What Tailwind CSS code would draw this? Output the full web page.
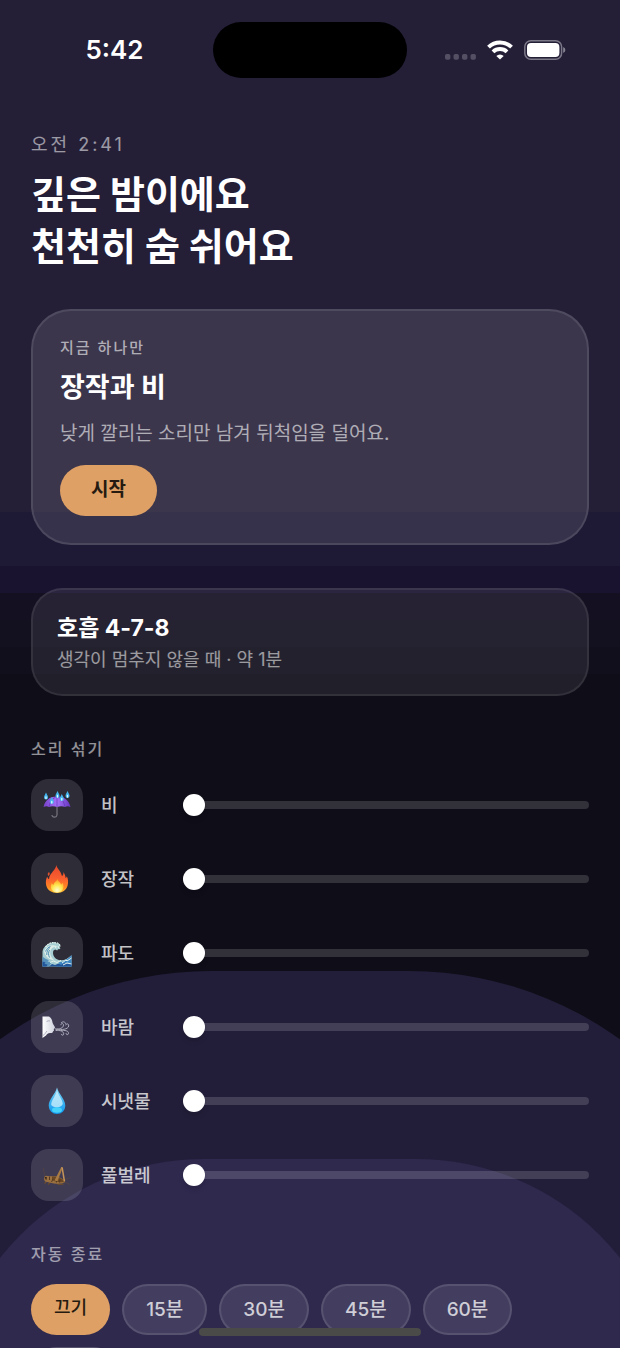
<!DOCTYPE html>
<html lang="ko">
<head>
  <meta charset="UTF-8">
  <meta name="viewport" content="width=device-width,initial-scale=1">
  <meta name="theme-color" content="#241e37">
  <title>깊은 밤 - 수면 사운드</title>
  <script src="https://cdn.jsdelivr.net/npm/@tailwindcss/browser@4"></script>
</head>
<body class="relative h-screen overflow-hidden bg-[#0f0d18] font-['Inter','Noto_Sans_CJK_KR',sans-serif] text-white">

  <!-- night sky and hills -->
  <div class="absolute inset-0 -z-10 overflow-hidden bg-[linear-gradient(to_bottom,#241e37_0_38%,#1e1935_38%_42%,#191330_42%_44%,#141022_44%_46%,#131020_46%_48%,#110f1c_48%_50%,#0f0d18_50%)]" aria-hidden="true">
    <div class="absolute top-[72%] -inset-x-[24%] h-[800px] rounded-[360px] bg-[#221e39]"></div>
    <div class="absolute top-[86%] -inset-x-[9%] h-[600px] rounded-[260px] bg-[#2e294d]"></div>
  </div>

  <header class="grid h-[100px] grid-cols-[1fr_194px_1fr] items-center">
    <div class="pl-4 text-center text-[26px] leading-8 font-semibold">5:42</div>
    <div class="h-14 rounded-full bg-black"></div>
    <div class="flex items-center justify-center gap-[11px] pr-4">
      <svg class="h-5 w-[31px]" viewBox="0 0 31 20" fill="#fff" fill-opacity=".22">
        <rect x="0" y="14" width="5.4" height="5.8" rx="1.8"/><rect x="8.5" y="14" width="5.4" height="5.8" rx="1.8"/>
        <rect x="17" y="14" width="5.4" height="5.8" rx="1.8"/><rect x="25.5" y="14" width="5.4" height="5.8" rx="1.8"/>
      </svg>
      <svg class="h-5 w-[26px]" viewBox="0 0 26 20" fill="none" stroke="#fff" stroke-width="4">
        <path d="M1.500 7.100a16.500 16.500 0 0 1 23 0"/>
        <path d="M6 11.900a10.200 10.200 0 0 1 14 0"/>
        <path d="M13 19.600l-3.700-3.700a5.300 5.300 0 0 1 7.400 0z" fill="#fff" stroke="none"/>
      </svg>
      <svg class="h-5 w-[42px]" viewBox="0 0 42 20">
        <rect x=".8" y=".8" width="36.8" height="18.4" rx="6" fill="none" stroke="#fff" stroke-opacity=".4" stroke-width="1.5"/>
        <rect x="3" y="3" width="32.4" height="14" rx="4" fill="#fff"/>
        <path d="M39.2 7q2.2 1 2.2 3t-2.2 3z" fill="#fff" fill-opacity=".45"/>
      </svg>
    </div>
  </header>

  <main class="px-[31px] pt-[33px]">
    <p class="text-lg leading-6 tracking-[3px] text-white/55">오전 2:41</p>
    <h1 class="mt-[11px] text-[38px] leading-[52px] font-bold">깊은 밤이에요<br>천천히 숨 쉬어요</h1>

    <section class="mt-[37px] rounded-[40px] border-2 border-white/10 bg-white/11 px-[27px] pt-[26px] pb-[27px]">
      <p class="text-[15px] leading-[22px] font-medium tracking-[2px] text-white/60">지금 하나만</p>
      <h2 class="mt-3 text-[27px] leading-[34px] font-bold">장작과 비</h2>
      <p class="mt-4 text-[19px] leading-[26px] text-white/60">낮게 깔리는 소리만 남겨 뒤척임을 덜어요.</p>
      <button type="button" class="mt-[18px] flex h-[51px] items-center rounded-full bg-[#dfa065] px-[31px] text-[19px] font-bold text-[#251b10]">시작</button>
    </section>

    <button type="button" class="mt-[43px] block w-full rounded-[32px] border-2 border-white/8 bg-white/8 px-6 pt-[23px] pb-[22px] text-left">
      <span class="block text-[23px] leading-[30px] font-bold">호흡 4-7-8</span>
      <span class="mt-[5px] block text-lg leading-6 text-white/55">생각이 멈추지 않을 때 · 약 1분</span>
    </button>

    <section class="mt-[41px]">
      <h3 class="text-base leading-6 font-medium tracking-[2px] text-white/55">소리 섞기</h3>
      <div class="mt-[18px] flex flex-col gap-[22px]">

        <div class="flex items-center">
          <div class="flex size-[52px] items-center justify-center rounded-[18px] bg-white/13">
            <svg class="size-[30px]" viewBox="0 0 30 30">
              <defs>
                <linearGradient id="canopy" x1="0" x2="1"><stop offset="0" stop-color="#7440c8"/><stop offset=".5" stop-color="#a672fa"/><stop offset="1" stop-color="#6535bd"/></linearGradient>
                <path id="raindrop" d="M0-4C1 -2 2-.6 2 .9a2 2 0 0 1-4 0C-2-.6-1-2 0-4z" fill="#42b5ee"/>
              </defs>
              <path d="M15 14v11a2.6 2.6 0 0 1-5 .5" fill="none" stroke="#77757f" stroke-width="1.2" stroke-linecap="round"/>
              <path d="M1.500 17C3 9.500 8.500 6.500 15 6.500s12 3 13.500 10.500c-2-1-4-1-5.500 0-2.500-1-5-1-8 0-3-1-5.500-1-8 0-1.500-1-3.500-1-5.500 0z" fill="url(#canopy)"/>
              <path d="M7 17C8 11 11 8 15 6.500M23 17C22 11 19 8 15 6.500M15 6.500V17" fill="none" stroke="#6031b6" stroke-width=".7"/>
              <use href="#raindrop" x="4" y="6.500"/><use href="#raindrop" x="15.500" y="5"/><use href="#raindrop" x="25.500" y="5"/>
              <use href="#raindrop" x="9.800" y="11"/><use href="#raindrop" x="19.800" y="8"/>
              <path d="M4 7v1.500M15.500 5.500V7M25.500 5.500V7M9.800 11.500V13M19.800 8.500V10" stroke="#dffaff" stroke-width="1.300" stroke-linecap="round"/>
            </svg>
          </div>
          <label for="rain" class="w-[100px] pt-[2px] pl-[18px] text-lg leading-6 font-medium text-white/75">비</label>
          <input id="rain" type="range" min="0" max="100" value="0" class="h-2 min-w-0 flex-1 appearance-none rounded-full bg-white/15 [&::-webkit-slider-thumb]:size-[22px] [&::-webkit-slider-thumb]:appearance-none [&::-webkit-slider-thumb]:rounded-full [&::-webkit-slider-thumb]:bg-white [&::-webkit-slider-thumb]:shadow-md">
        </div>

        <div class="flex items-center">
          <div class="flex size-[52px] items-center justify-center rounded-[18px] bg-white/13">
            <svg class="size-[30px]" viewBox="0 0 30 30">
              <defs>
                <linearGradient id="flame" x1="0" y1="0" x2="0" y2="1"><stop offset="0" stop-color="#e4472b"/><stop offset=".5" stop-color="#f9602f"/><stop offset=".8" stop-color="#ff8a22"/><stop offset="1" stop-color="#ffc53a"/></linearGradient>
                <radialGradient id="core" cx=".5" cy=".85" r=".8"><stop offset="0" stop-color="#fffbd0"/><stop offset=".5" stop-color="#ffe64d"/><stop offset="1" stop-color="#ff9126"/></radialGradient>
              </defs>
              <path d="M14.300 1c.3 3 4.500 5.800 5.700 11.200 1.200-1 1.600-2.400 1.400-4.200 1.600 2.200 2 4.500 2.300 6.300.7-.5 1-1.200 1.100-2 1.400 2.500 1.700 6 .8 9.200C24.600 26 20.300 29 15 29S5.400 26.200 4.300 21.800c-.9-3.500-.4-7 1-9.300.2 1.400.8 2.200 1.700 2.800C7.600 11 8.800 10.300 11 7.300 12.800 5 14 3.500 14.300 1z" fill="url(#flame)"/>
              <path d="M7 8c1.200 1.600.8 2.700-.4 4C5.200 10.800 5.500 9.400 7 8z" fill="#e2522d"/>
              <path d="M15.400 14.500c0 2.500 3 3.200 3.600 6 .8-.4 1.200-1.100 1.300-2 1.600 2.500 1.500 5 .3 7.300-1 1.700-3 2.700-5.400 2.700s-4.400-1-5.600-2.900c-1.200-2-1-4.600.3-6.600.3 1 .8 1.500 1.600 1.900.6-3.100 3.600-3.500 3.900-6.400z" fill="url(#core)"/>
            </svg>
          </div>
          <label for="fire" class="w-[100px] pt-[2px] pl-[18px] text-lg leading-6 font-medium text-white/75">장작</label>
          <input id="fire" type="range" min="0" max="100" value="0" class="h-2 min-w-0 flex-1 appearance-none rounded-full bg-white/15 [&::-webkit-slider-thumb]:size-[22px] [&::-webkit-slider-thumb]:appearance-none [&::-webkit-slider-thumb]:rounded-full [&::-webkit-slider-thumb]:bg-white [&::-webkit-slider-thumb]:shadow-md">
        </div>

        <div class="flex items-center">
          <div class="flex size-[52px] items-center justify-center rounded-[18px] bg-white/13">
            <svg class="size-[30px]" viewBox="0 0 30 30">
              <path d="M.5 28.500V13.500C1 9.500 5 5.500 9 5.200c2-1.500 4.500-1.200 5.500 0 2-.2 3.500 1 4 2.700l-1.300 1 1.300 2-2.500.3-.8 1.300-2-1-1.700 1c-1.500 3.500.5 8.500 6 9.700 4.500.8 8-1.500 12-5v11.300z" fill="#a5cdd2"/>
              <path d="M2 13c2-4 5.500-6 9.500-5.700 1.500.2 3.500.7 4.500 1.700-3.500-.8-6.500.5-7.500 3.500-1 3.700.8 8 4.500 10C7 22 3 18.500 2 13z" fill="#dcebe6"/>
              <path d="M3.500 13.500c1-2.500 3-4.500 5-5M4.800 17c-.3-3 1-6 3.200-7.500M7.500 19.500c-1.300-2.500-1.300-5 0-7.500" fill="none" stroke="#3f87ae" stroke-width=".9"/>
              <path d="M29.500 17v11.500H14c3.500-1.200 4-2.700 2.500-4.300 5 .3 9.500-3.200 13-7.200z" fill="#3d86c2"/>
              <path d="M.5 18.500c2 2 4 3 6.500 3.500l-1.500 1.500 4 1-2.500 4H.5z" fill="#5591bb"/>
              <path d="M.5 23.500l3 1-1 1.500 3 .5-1 2h-4zM7 28.500l3-2.500 3 1 3.500-1.500 2.500 1.500 3.500-2 7 .5v3z" fill="#205699"/>
              <path d="M8 24.500l3.500-1.500 3.500 1.500 4-2M20 25l4-3 1 1 4.500-3M21 27l4-2 4.500 1" fill="none" stroke="#e3f3ef" stroke-width="1"/>
              <path d="M3.500 9l3-3 3.500-1.500 3.500.3 2 .2 2 1.500.7 2.500M13 8.500l1.500 2.500M16 8.500l1.500 1.800" fill="none" stroke="#dff0eb" stroke-width="1.200" stroke-dasharray="1.800 .8"/>
            </svg>
          </div>
          <label for="waves" class="w-[100px] pt-[2px] pl-[18px] text-lg leading-6 font-medium text-white/75">파도</label>
          <input id="waves" type="range" min="0" max="100" value="0" class="h-2 min-w-0 flex-1 appearance-none rounded-full bg-white/15 [&::-webkit-slider-thumb]:size-[22px] [&::-webkit-slider-thumb]:appearance-none [&::-webkit-slider-thumb]:rounded-full [&::-webkit-slider-thumb]:bg-white [&::-webkit-slider-thumb]:shadow-md">
        </div>

        <div class="flex items-center">
          <div class="flex size-[52px] items-center justify-center rounded-[18px] bg-white/13">
            <svg class="size-[30px]" viewBox="0 0 30 30">
              <defs><linearGradient id="face"><stop offset="0" stop-color="#fff"/><stop offset="1" stop-color="#ced1dd"/></linearGradient></defs>
              <path d="M.5 4.500h6.500c2.500 1.500 3.200 3.500 3.500 6 .2 1.700 2.500 4 2.500 5.200-.1.700-.9.700-1.200 1.200-.2.600.4.900.2 1.500-.2.500-.9.600-1 1.200-.2 1.200-1.200 1.600-2.700 1.500-2.300-.1-3.200 1-4.300 2.500L.5 26z" fill="url(#face)"/>
              <path d="M8 9c-1.500-.5-3 0-3.600 1M1 23.500c2-1 2.500-3 4-4.500" fill="none" stroke="#9ea0b2" stroke-width=".8"/>
              <path d="M13.500 16.800c4 .7 8-.8 8-3.700 0-2.300-2.800-2-2.600-.3M14 17.600c6 .2 12 0 12.700-3.600.4-2.400-2.700-3-3-1.100M14 18.500c4-.5 7.500.7 7.700 3.300 0 1.800-2.200 1.900-2.300.5M19 18.500c4-.4 7.500.2 7.500 2.700 0 1.900-2.400 1.900-2.500.4M19.500 10.500c2-1.500 4-.5 4 1" fill="none" stroke="#a9a9b8" stroke-width="1" stroke-linecap="round"/>
            </svg>
          </div>
          <label for="wind" class="w-[100px] pt-[2px] pl-[18px] text-lg leading-6 font-medium text-white/75">바람</label>
          <input id="wind" type="range" min="0" max="100" value="0" class="h-2 min-w-0 flex-1 appearance-none rounded-full bg-white/15 [&::-webkit-slider-thumb]:size-[22px] [&::-webkit-slider-thumb]:appearance-none [&::-webkit-slider-thumb]:rounded-full [&::-webkit-slider-thumb]:bg-white [&::-webkit-slider-thumb]:shadow-md">
        </div>

        <div class="flex items-center">
          <div class="flex size-[52px] items-center justify-center rounded-[18px] bg-white/13">
            <svg class="size-[30px]" viewBox="0 0 30 30">
              <defs><linearGradient id="drop" x1="0" y1="0" x2="0" y2="1"><stop offset="0" stop-color="#8bd4f4"/><stop offset=".5" stop-color="#3fb4ef"/><stop offset="1" stop-color="#1199ef"/></linearGradient></defs>
              <path d="M15 1.500c1.500 6.500 8.300 11.500 8.300 18.300a8.300 8.300 0 0 1-16.600 0C6.700 13 13.500 8 15 1.500z" fill="url(#drop)"/>
              <path d="M15 4c1.200 5 5.500 9.500 5.800 14-1.500 3.500-8.300 5-11.600 1C9 14.500 14 9.500 15 4z" fill="#dcf7fd" fill-opacity=".7"/>
              <ellipse cx="15" cy="24" rx="5" ry="2.700" fill="#45d3fc"/>
            </svg>
          </div>
          <label for="stream" class="w-[100px] pt-[2px] pl-[18px] text-lg leading-6 font-medium text-white/75">시냇물</label>
          <input id="stream" type="range" min="0" max="100" value="0" class="h-2 min-w-0 flex-1 appearance-none rounded-full bg-white/15 [&::-webkit-slider-thumb]:size-[22px] [&::-webkit-slider-thumb]:appearance-none [&::-webkit-slider-thumb]:rounded-full [&::-webkit-slider-thumb]:bg-white [&::-webkit-slider-thumb]:shadow-md">
        </div>

        <div class="flex items-center">
          <div class="flex size-[52px] items-center justify-center rounded-[18px] bg-white/13">
            <svg class="size-[30px]" viewBox="0 0 30 30">
              <path d="M3 16C2 12.500 1.700 10.500 1.600 8M22 20l6.500-2.500M22 22l6 2.500" fill="none" stroke="#544441" stroke-width=".8"/>
              <path d="M5 21l-2.500 2.500M9 21.500l-3 3M13 22l3.500 2.500 5-.3" fill="none" stroke="#684a2e" stroke-width="1.200"/>
              <path d="M2 18.500c0-1.800 1.300-2.800 3-2.600l6 .3c4-.2 9 1 12 5.300-.5 2.200-9 3-14.500 1.300L3 21.500c-.7-.8-1-2-1-3z" fill="#9a7040"/>
              <path d="M10 16.500c5-.5 10 1.500 13 5.200-4 .9-9 .6-13-1.700z" fill="#694724"/>
              <path d="M4.500 17l-.5 3M7.500 16.500V20M11 19l-1.500 3M14.500 18.500v4M18 19.500l-.5 3" stroke="#4e351f" stroke-width=".9"/>
              <path d="M12.500 20.500L19.300 7l1.400.7-5.200 13.500z" fill="#a87a44"/>
              <path d="M19.300 7l1.600.4 2.300 13.800-1.500.2z" fill="#c59457"/>
              <circle cx="3.600" cy="17.800" r=".9" fill="#302018"/>
            </svg>
          </div>
          <label for="insects" class="w-[100px] pt-[2px] pl-[18px] text-lg leading-6 font-medium text-white/75">풀벌레</label>
          <input id="insects" type="range" min="0" max="100" value="0" class="h-2 min-w-0 flex-1 appearance-none rounded-full bg-white/15 [&::-webkit-slider-thumb]:size-[22px] [&::-webkit-slider-thumb]:appearance-none [&::-webkit-slider-thumb]:rounded-full [&::-webkit-slider-thumb]:bg-white [&::-webkit-slider-thumb]:shadow-md">
        </div>

      </div>
    </section>

    <section class="mt-[41px]">
      <h3 class="text-base leading-6 font-medium tracking-[2px] text-white/55">자동 종료</h3>
      <div class="mt-[18px] flex flex-wrap gap-3">
        <button type="button" aria-pressed="true" class="h-[51px] rounded-full bg-[#dfa065] px-[23px] pb-1 text-lg leading-6 font-medium text-[#251b10]">끄기</button>
        <button type="button" class="h-[51px] rounded-full border-2 border-white/10 bg-white/10 px-[22px] text-[19px] leading-6 font-medium text-white/75">15분</button>
        <button type="button" class="h-[51px] rounded-full border-2 border-white/10 bg-white/10 px-[22px] text-[19px] leading-6 font-medium text-white/75">30분</button>
        <button type="button" class="h-[51px] rounded-full border-2 border-white/10 bg-white/10 px-[22px] text-[19px] leading-6 font-medium text-white/75">45분</button>
        <button type="button" class="h-[51px] rounded-full border-2 border-white/10 bg-white/10 px-[22px] text-[19px] leading-6 font-medium text-white/75">60분</button>
        <button type="button" aria-label="90분" class="h-[51px] w-[88px] rounded-full border-2 border-white/10 bg-white/10"></button>
      </div>
    </section>
  </main>

  <!-- home indicator -->
  <div class="absolute bottom-3 left-1/2 h-2 w-[222px] -translate-x-1/2 rounded-full bg-[#4a4a48]"></div>

</body>
</html>
